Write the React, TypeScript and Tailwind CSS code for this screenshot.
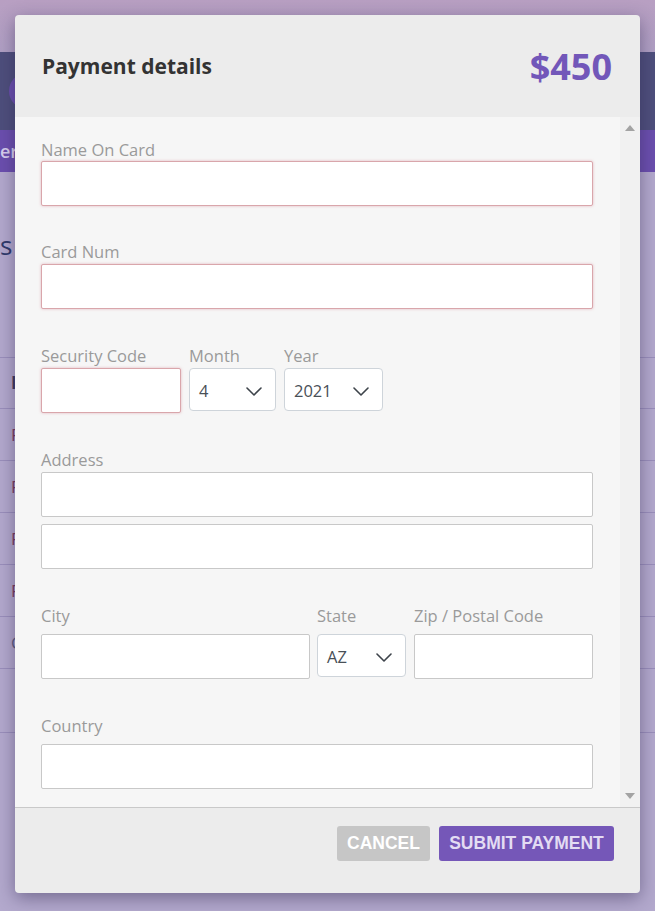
import React from "react";

function Chevron() {
  return (
    <svg width="16" height="9" viewBox="0 0 16 9" fill="none" className="shrink-0">
      <path d="M1 1l7 7 7-7" stroke="#3d434a" strokeWidth="1.6" strokeLinecap="round" strokeLinejoin="round" />
    </svg>
  );
}

function Label({ children, className = "" }: { children: React.ReactNode; className?: string }) {
  return <div className={`h-[20px] leading-[20px] text-[16.5px] text-[#9a9a9a] whitespace-nowrap ${className}`}>{children}</div>;
}

function Field({ invalid = false, className = "" }: { invalid?: boolean; className?: string }) {
  const border = invalid
    ? "border-[#d9a6ab] shadow-[0_0_3px_rgba(200,90,110,0.4)]"
    : "border-[#c8c8c8]";
  return <div className={`h-[45px] bg-white border rounded-[2px] ${border} ${className}`} />;
}

function Select({ value, className = "" }: { value: string; className?: string }) {
  return (
    <div className={`h-[43px] bg-white border border-[#ced4da] rounded-[4px] flex items-center justify-between pl-[9px] pr-[13px] pt-[3px] text-[16.5px] text-[#495057] ${className}`}>
      <span>{value}</span>
      <Chevron />
    </div>
  );
}

function BackgroundPage() {
  const rows = [
    { t: "F", c: "text-[#7c3b5e]" },
    { t: "F", c: "text-[#7c3b5e]" },
    { t: "F", c: "text-[#7c3b5e]" },
    { t: "F", c: "text-[#7c3b5e]" },
    { t: "C", c: "text-[#5d5d80]" },
  ];
  return (
    <div className="w-[655px] h-[911px] bg-[#b3a9cd] font-['Open_Sans',sans-serif] overflow-hidden">
      <div className="h-[52px] bg-gradient-to-b from-[#b89fc2] to-[#b0a0c4]" />
      <div className="h-[78px] bg-[#4e4f7c] flex items-center pl-[9px]">
        <div className="w-[36px] h-[36px] rounded-full bg-[#6a4fae]" />
      </div>
      <div className="h-[42px] bg-[#6b4fae] flex items-center">
        <span className="text-[18px] font-semibold text-[#d8d0ee]">er</span>
      </div>
      <div className="h-[185px] pt-[55px]">
        <span className="block leading-[36px] text-[26px] text-[#2f3a6b]">s</span>
      </div>
      <div className="border-t border-[#9a8fbb]">
        <div className="h-[51px] flex items-center pl-[11px] text-[17px] font-bold text-[#3d3a5c] border-b border-[#9a8fbb]">I</div>
        {rows.map((r, i) => (
          <div key={i} className={`h-[52px] flex items-center pl-[11px] text-[17px] ${r.c} border-b border-[#9a8fbb]`}>
            {r.t}
          </div>
        ))}
        <div className="h-[64px] border-b border-[#9a8fbb]" />
      </div>
    </div>
  );
}

export default function App() {
  return (
    <div className="relative w-[655px] h-[911px] overflow-hidden">
      <BackgroundPage />
      <div className="absolute inset-0 flex justify-center pt-[15px]">
        <div className="w-[625px] h-[878px] flex flex-col rounded-[4px] overflow-hidden bg-[#ececec] shadow-[0_5px_18px_rgba(40,30,70,0.45)] font-['Open_Sans',sans-serif]">
          <div className="h-[102px] shrink-0 flex items-center justify-between pl-[27px] pr-[28px]">
            <h2 className="text-[21px] font-bold text-[#333] pt-[2px]">Payment details</h2>
            <div className="text-[36px] font-bold text-[#7257b9] leading-none pt-[2px]">$450</div>
          </div>

          <div className="flex-1 flex min-h-0">
            <div className="flex-1 bg-[#f6f6f6] pl-[26px] pr-[27px] pt-[23px] overflow-hidden">
              <Label>Name On Card</Label>
              <Field invalid className="mt-[1px]" />

              <Label className="mt-[36px]">Card Num</Label>
              <Field invalid className="mt-[2px]" />

              <div className="mt-[37px] flex gap-[8px] items-start">
                <div className="w-[140px]">
                  <Label>Security Code</Label>
                  <Field invalid className="mt-[2px]" />
                </div>
                <div className="w-[87px]">
                  <Label>Month</Label>
                  <Select value="4" className="mt-[2px]" />
                </div>
                <div className="w-[99px]">
                  <Label>Year</Label>
                  <Select value="2021" className="mt-[2px]" />
                </div>
              </div>

              <Label className="mt-[37px]">Address</Label>
              <Field className="mt-[2px]" />
              <Field className="mt-[7px]" />

              <div className="mt-[37px] flex gap-[7px] items-start">
                <div className="w-[269px]">
                  <Label>City</Label>
                  <Field className="mt-[8px]" />
                </div>
                <div className="w-[89px]">
                  <Label>State</Label>
                  <Select value="AZ" className="mt-[8px]" />
                </div>
                <div className="flex-1 ml-[1px]">
                  <Label>Zip / Postal Code</Label>
                  <Field className="mt-[8px]" />
                </div>
              </div>

              <Label className="mt-[37px]">Country</Label>
              <Field className="mt-[8px]" />
            </div>
            <div className="w-[20px] bg-[#f1f1f1] flex flex-col items-center justify-between py-[8px]">
              <svg width="10" height="6" viewBox="0 0 10 6"><path d="M0 6L5 0L10 6Z" fill="#a3a3a3" /></svg>
              <svg width="10" height="6" viewBox="0 0 10 6"><path d="M0 0L5 6L10 0Z" fill="#a3a3a3" /></svg>
            </div>
          </div>

          <div className="h-[86px] shrink-0 border-t border-[#c9c9c9] flex justify-end items-start gap-[9px] pt-[18px] pr-[26px] font-['Liberation_Sans',Arial,sans-serif]">
            <button className="h-[35px] w-[93px] rounded-[3px] bg-[#c6c6c6] text-white text-[17.5px] font-bold">CANCEL</button>
            <button className="h-[35px] w-[175px] rounded-[3px] bg-[#7557b8] text-[#e3dcf3] text-[17.5px] font-bold">SUBMIT PAYMENT</button>
          </div>
        </div>
      </div>
    </div>
  );
}
